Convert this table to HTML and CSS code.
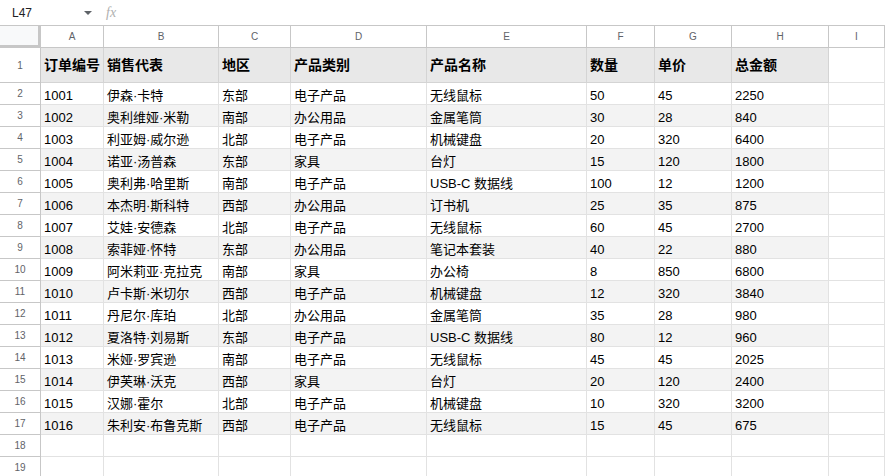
FILE: index.html
```html
<!DOCTYPE html>
<html lang="zh">
<head>
<meta charset="utf-8">
<title>Sheet</title>
<link rel="stylesheet" href="styles.css">
</head>
<body>
<div class="topbar">
  <div class="namebox"><span class="ref">L47</span><span class="caret"></span></div>
  <span class="fx">fx</span>
</div>
<div class="sheet">
  <div class="row colhead">
    <div class="corner"></div><div class="ch">A</div><div class="ch">B</div><div class="ch">C</div><div class="ch">D</div><div class="ch">E</div><div class="ch">F</div><div class="ch">G</div><div class="ch">H</div><div class="ch">I</div>
  </div>
  <div class="row head">
    <div class="rh">1</div><div class="d">订单编号</div><div class="d">销售代表</div><div class="d">地区</div><div class="d">产品类别</div><div class="d">产品名称</div><div class="d">数量</div><div class="d">单价</div><div class="d">总金额</div><div class="e"></div>
  </div>
  <div class="row"><div class="rh">2</div><div class="d">1001</div><div class="d">伊森·卡特</div><div class="d">东部</div><div class="d">电子产品</div><div class="d">无线鼠标</div><div class="d">50</div><div class="d">45</div><div class="d">2250</div><div class="e"></div></div>
  <div class="row band"><div class="rh">3</div><div class="d">1002</div><div class="d">奥利维娅·米勒</div><div class="d">南部</div><div class="d">办公用品</div><div class="d">金属笔筒</div><div class="d">30</div><div class="d">28</div><div class="d">840</div><div class="e"></div></div>
  <div class="row"><div class="rh">4</div><div class="d">1003</div><div class="d">利亚姆·威尔逊</div><div class="d">北部</div><div class="d">电子产品</div><div class="d">机械键盘</div><div class="d">20</div><div class="d">320</div><div class="d">6400</div><div class="e"></div></div>
  <div class="row band"><div class="rh">5</div><div class="d">1004</div><div class="d">诺亚·汤普森</div><div class="d">东部</div><div class="d">家具</div><div class="d">台灯</div><div class="d">15</div><div class="d">120</div><div class="d">1800</div><div class="e"></div></div>
  <div class="row"><div class="rh">6</div><div class="d">1005</div><div class="d">奥利弗·哈里斯</div><div class="d">南部</div><div class="d">电子产品</div><div class="d">USB-C 数据线</div><div class="d">100</div><div class="d">12</div><div class="d">1200</div><div class="e"></div></div>
  <div class="row band"><div class="rh">7</div><div class="d">1006</div><div class="d">本杰明·斯科特</div><div class="d">西部</div><div class="d">办公用品</div><div class="d">订书机</div><div class="d">25</div><div class="d">35</div><div class="d">875</div><div class="e"></div></div>
  <div class="row"><div class="rh">8</div><div class="d">1007</div><div class="d">艾娃·安德森</div><div class="d">北部</div><div class="d">电子产品</div><div class="d">无线鼠标</div><div class="d">60</div><div class="d">45</div><div class="d">2700</div><div class="e"></div></div>
  <div class="row band"><div class="rh">9</div><div class="d">1008</div><div class="d">索菲娅·怀特</div><div class="d">东部</div><div class="d">办公用品</div><div class="d">笔记本套装</div><div class="d">40</div><div class="d">22</div><div class="d">880</div><div class="e"></div></div>
  <div class="row"><div class="rh">10</div><div class="d">1009</div><div class="d">阿米莉亚·克拉克</div><div class="d">南部</div><div class="d">家具</div><div class="d">办公椅</div><div class="d">8</div><div class="d">850</div><div class="d">6800</div><div class="e"></div></div>
  <div class="row band"><div class="rh">11</div><div class="d">1010</div><div class="d">卢卡斯·米切尔</div><div class="d">西部</div><div class="d">电子产品</div><div class="d">机械键盘</div><div class="d">12</div><div class="d">320</div><div class="d">3840</div><div class="e"></div></div>
  <div class="row"><div class="rh">12</div><div class="d">1011</div><div class="d">丹尼尔·库珀</div><div class="d">北部</div><div class="d">办公用品</div><div class="d">金属笔筒</div><div class="d">35</div><div class="d">28</div><div class="d">980</div><div class="e"></div></div>
  <div class="row band"><div class="rh">13</div><div class="d">1012</div><div class="d">夏洛特·刘易斯</div><div class="d">东部</div><div class="d">电子产品</div><div class="d">USB-C 数据线</div><div class="d">80</div><div class="d">12</div><div class="d">960</div><div class="e"></div></div>
  <div class="row"><div class="rh">14</div><div class="d">1013</div><div class="d">米娅·罗宾逊</div><div class="d">南部</div><div class="d">电子产品</div><div class="d">无线鼠标</div><div class="d">45</div><div class="d">45</div><div class="d">2025</div><div class="e"></div></div>
  <div class="row band"><div class="rh">15</div><div class="d">1014</div><div class="d">伊芙琳·沃克</div><div class="d">西部</div><div class="d">家具</div><div class="d">台灯</div><div class="d">20</div><div class="d">120</div><div class="d">2400</div><div class="e"></div></div>
  <div class="row"><div class="rh">16</div><div class="d">1015</div><div class="d">汉娜·霍尔</div><div class="d">北部</div><div class="d">电子产品</div><div class="d">机械键盘</div><div class="d">10</div><div class="d">320</div><div class="d">3200</div><div class="e"></div></div>
  <div class="row band"><div class="rh">17</div><div class="d">1016</div><div class="d">朱利安·布鲁克斯</div><div class="d">西部</div><div class="d">电子产品</div><div class="d">无线鼠标</div><div class="d">15</div><div class="d">45</div><div class="d">675</div><div class="e"></div></div>
  <div class="row"><div class="rh">18</div><div class="e"></div><div class="e"></div><div class="e"></div><div class="e"></div><div class="e"></div><div class="e"></div><div class="e"></div><div class="e"></div><div class="e"></div></div>
  <div class="row"><div class="rh">19</div><div class="e"></div><div class="e"></div><div class="e"></div><div class="e"></div><div class="e"></div><div class="e"></div><div class="e"></div><div class="e"></div><div class="e"></div></div>
</div>
</body>
</html>
```
FILE: styles.css
```css
* { box-sizing: border-box; }
html, body { margin: 0; padding: 0; background: #fff; overflow: hidden; }
body {
  width: 885px;
  height: 476px;
  font-family: "Liberation Sans", Arial, "Noto Sans CJK SC", sans-serif;
  color: #000;
}
.topbar {
  height: 26px;
  border-bottom: 1px solid #c7c7c7;
  display: flex;
  align-items: center;
}
.namebox {
  width: 94px;
  display: flex;
  align-items: center;
  padding-left: 12px;
  font-size: 12px;
  color: #202124;
}
.ref { flex: 1; }
.caret {
  width: 0; height: 0;
  border-left: 4px solid transparent;
  border-right: 4px solid transparent;
  border-top: 4px solid #5f6368;
  margin-right: 2px;
}
.fx {
  margin-left: 12px;
  font-family: "Liberation Serif", serif;
  font-style: italic;
  font-size: 14px;
  color: #b0b0b0;
}
.row {
  display: grid;
  grid-template-columns: 41px 63px 115px 72px 136px 160px 68px 77px 97px 1fr;
  height: 22px;
}
.row > div {
  border-right: 1px solid #e2e2e2;
  border-bottom: 1px solid #e2e2e2;
  overflow: hidden;
  white-space: nowrap;
}
.colhead > div {
  border-right-color: #c7c7c7;
  border-bottom-color: #c7c7c7;
}
.corner { background: #f8f9fa; box-shadow: inset -2px -2px 0 #c7c7c7; }
.ch, .rh {
  display: flex;
  align-items: center;
  justify-content: center;
  font-size: 10px;
  color: #5f6368;
  font-family: "Liberation Sans", Arial, sans-serif;
}
.row > .rh { border-right-color: #c7c7c7; border-bottom-color: #c7c7c7; }
.d {
  display: flex;
  align-items: center;
  padding: 4px 3px 0 3px;
  font-size: 13px;
  line-height: 15px;
  color: #000;
}
.head { height: 35px; }
.head .d {
  background: #e8e8e8;
  font-weight: bold;
  font-size: 14px;
  line-height: 17px;
  padding-top: 1px;
  border-right-color: #d4d4d4;
  border-bottom-color: #d4d4d4;
}
.band .d { background: #f3f3f3; }
```
